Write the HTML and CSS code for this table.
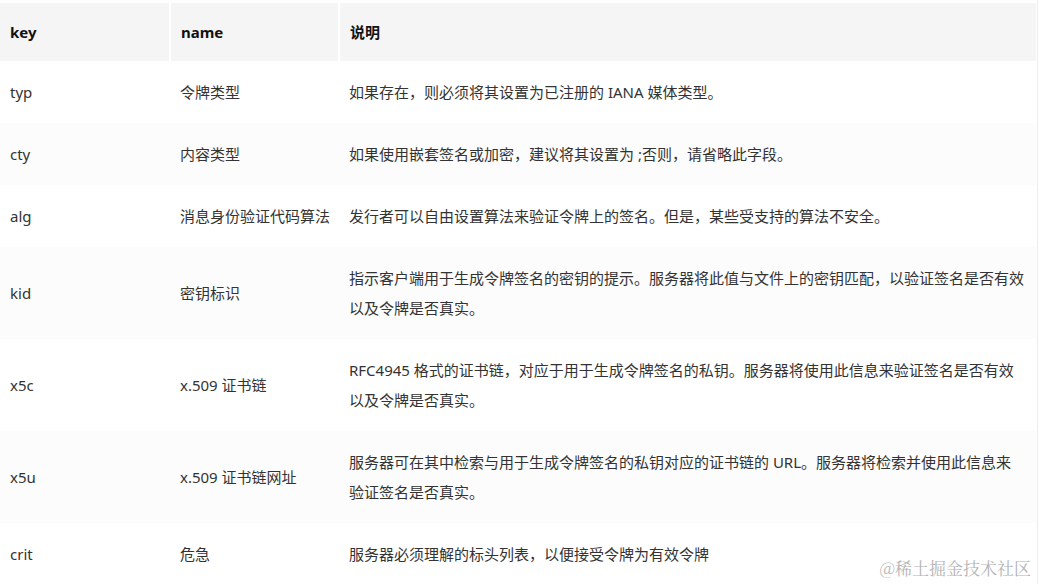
FILE: index.html
```html
<!DOCTYPE html>
<html lang="zh-CN">
<head>
<meta charset="utf-8">
<link rel="stylesheet" href="styles.css">
</head>
<body>
<div class="wrap">
  <table class="tbl">
    <colgroup>
      <col class="c1"><col class="c2"><col class="c3">
    </colgroup>
    <thead>
      <tr><th>key</th><th>name</th><th>说明</th></tr>
    </thead>
    <tbody>
      <tr><td>typ</td><td>令牌类型</td><td>如果存在，则必须将其设置为已注册的 IANA 媒体类型。</td></tr>
      <tr><td>cty</td><td>内容类型</td><td>如果使用嵌套签名或加密，建议将其设置为 ;否则，请省略此字段。</td></tr>
      <tr><td>alg</td><td>消息身份验证代码算法</td><td>发行者可以自由设置算法来验证令牌上的签名。但是，某些受支持的算法不安全。</td></tr>
      <tr><td>kid</td><td>密钥标识</td><td>指示客户端用于生成令牌签名的密钥的提示。服务器将此值与文件上的密钥匹配，以验证签名是否有效以及令牌是否真实。</td></tr>
      <tr><td>x5c</td><td>x.509 证书链</td><td>RFC4945 格式的证书链，对应于用于生成令牌签名的私钥。服务器将使用此信息来验证签名是否有效以及令牌是否真实。</td></tr>
      <tr><td>x5u</td><td>x.509 证书链网址</td><td>服务器可在其中检索与用于生成令牌签名的私钥对应的证书链的 URL。服务器将检索并使用此信息来验证签名是否真实。</td></tr>
      <tr><td>crit</td><td>危急</td><td>服务器必须理解的标头列表，以便接受令牌为有效令牌</td></tr>
    </tbody>
  </table>
  <div class="mark">@稀土掘金技术社区</div>
</div>
</body>
</html>
```

FILE: styles.css
```css
html, body {
  margin: 0;
  padding: 0;
  background: #fff;
}
body {
  font-family: "Noto Sans", "Noto Sans CJK SC", sans-serif;
  color: #333;
  font-size: 15px;
}
.wrap {
  position: relative;
  width: 1038px;
  height: 584px;
  overflow: hidden;
  border-right: 1px solid #ededed;
  padding-top: 3px;
  box-sizing: border-box;
}
.tbl {
  width: 1036px;
  table-layout: fixed;
  border-collapse: collapse;
}
.c1 { width: 170px; }
.c2 { width: 169px; }
.tbl th {
  background: #f5f5f5;
  height: 58px;
  padding: 0 0 0 10px;
  text-align: left;
  font-weight: 700;
  color: #111;
  line-height: 30px;
  border-right: 2px solid #fff;
  box-sizing: border-box;
}
.tbl th:last-child { border-right: 0; }
.tbl td {
  padding: 16px 0 16px 10px;
  line-height: 30px;
  vertical-align: middle;
  word-break: break-all;
  white-space: nowrap;
}
.tbl td:last-child {
  padding-right: 11px;
  white-space: normal;
}
.tbl tbody tr:nth-child(even) td { background: #fcfcfc; }
.mark {
  position: absolute;
  right: 6px;
  bottom: 4px;
  font-size: 17px;
  color: #b4b4b4;
  font-family: "Noto Serif CJK SC", "Noto Sans CJK SC", serif;
}
```
